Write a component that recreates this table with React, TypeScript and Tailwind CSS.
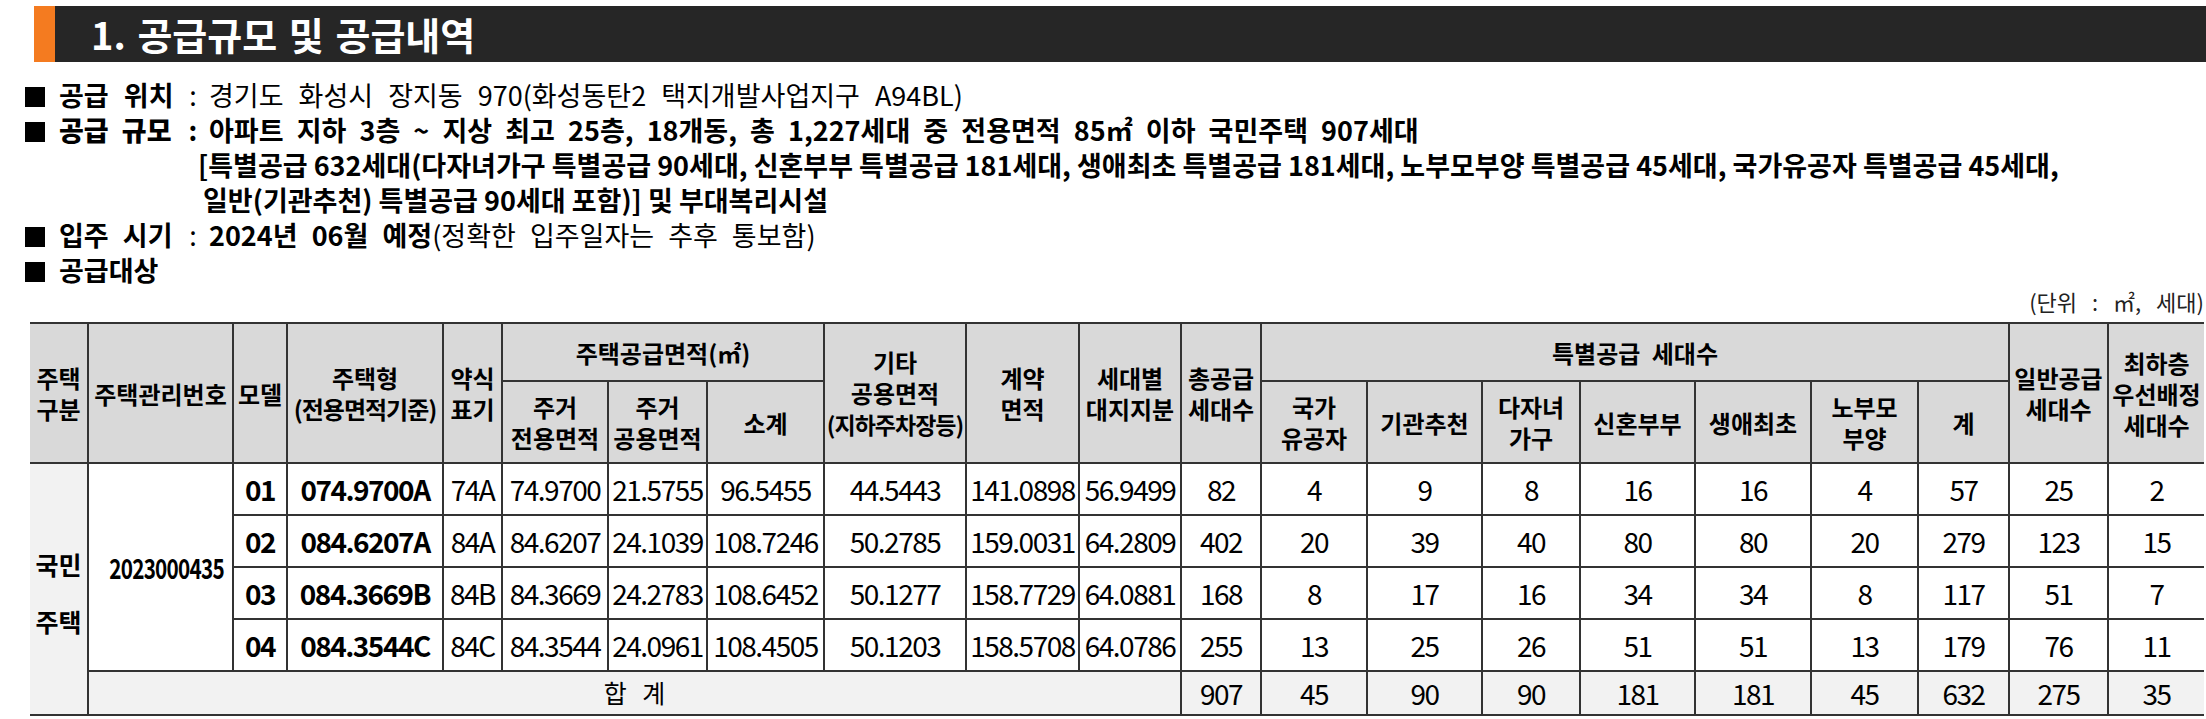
import React from 'react';

const rows = [
  { m: '01', type: '074.9700A', s: '74A', a: '74.9700', b: '21.5755', c: '96.5455', d: '44.5443', e: '141.0898', f: '56.9499', t: '82', sp: ['4', '9', '8', '16', '16', '4', '57'], g: '25', l: '2' },
  { m: '02', type: '084.6207A', s: '84A', a: '84.6207', b: '24.1039', c: '108.7246', d: '50.2785', e: '159.0031', f: '64.2809', t: '402', sp: ['20', '39', '40', '80', '80', '20', '279'], g: '123', l: '15' },
  { m: '03', type: '084.3669B', s: '84B', a: '84.3669', b: '24.2783', c: '108.6452', d: '50.1277', e: '158.7729', f: '64.0881', t: '168', sp: ['8', '17', '16', '34', '34', '8', '117'], g: '51', l: '7' },
  { m: '04', type: '084.3544C', s: '84C', a: '84.3544', b: '24.0961', c: '108.4505', d: '50.1203', e: '158.5708', f: '64.0786', t: '255', sp: ['13', '25', '26', '51', '51', '13', '179'], g: '76', l: '11' },
];

const totals = ['907', '45', '90', '90', '181', '181', '45', '632', '275', '35'];

const th = 'border-2 border-[#333] bg-[#d9d9d9] font-bold text-[24px] leading-[31px] text-center align-middle p-0 whitespace-nowrap';
const cell = 'border-2 border-[#333] text-center align-middle p-0 whitespace-nowrap';
const td = `${cell} text-[28px] tracking-[-1.5px]`;

function Bullet() {
  return <span className="inline-block w-[20px] h-[20px] bg-black mr-[14px] align-[-1px]" />;
}

function Label({ children }: { children: React.ReactNode }) {
  return (
    <>
      <span className="inline-block w-[152px]">
        <Bullet />
        <b>{children}</b>
      </span>
      <span className="inline-block w-[32px] text-center">:</span>
    </>
  );
}

export default function App() {
  return (
    <div className="w-[2206px] h-[719px] bg-white pt-[6px] font-['Noto_Sans_CJK_KR',sans-serif] text-black overflow-hidden">
      {/* section title */}
      <div className="ml-[34px] h-[56px] flex">
        <div className="w-[21px] bg-[#f47b20]" />
        <div className="flex-1 bg-[#262626] flex items-center pl-[36px]">
          <span className="text-white font-bold text-[38px] leading-none [word-spacing:3px]">1. 공급규모 및 공급내역</span>
        </div>
      </div>

      <div className="mt-[15px] pl-[25px] text-[27px] leading-[35px] whitespace-nowrap">
        <div className="[word-spacing:9px]">
          <Label>공급 위치</Label>
          경기도 화성시 장지동 970(화성동탄2 택지개발사업지구 A94BL)
        </div>
        <div className="font-bold [word-spacing:7px]">
          <Label>공급 규모</Label>
          아파트 지하 3층 ~ 지상 최고 25층, 18개동, 총 1,227세대 중 전용면적 85㎡ 이하 국민주택 907세대
        </div>
        <div className="font-bold pl-[173px]">
          [특별공급 632세대(다자녀가구 특별공급 90세대, 신혼부부 특별공급 181세대, 생애최초 특별공급 181세대, 노부모부양 특별공급 45세대, 국가유공자 특별공급 45세대,
        </div>
        <div className="font-bold pl-[178px]">일반(기관추천) 특별공급 90세대 포함)] 및 부대복리시설</div>
        <div className="[word-spacing:8px]">
          <Label>입주 시기</Label>
          <b>2024년 06월 예정</b>(정확한 입주일자는 추후 통보함)
        </div>
        <div className="font-bold">
          <Bullet />
          공급대상
        </div>
      </div>

      <div className="ml-[30px] w-[2174px]">
        <div className="mt-[2px] h-[24px] text-right text-[22px] leading-[24px] text-[#222] [word-spacing:10px]">(단위 : ㎡, 세대)</div>

        <table className="mt-[9px] w-[2174px] table-fixed border-collapse border-y-2 border-[#222]">
          <colgroup>
            <col className="w-[58px]" />
            <col className="w-[145px]" />
            <col className="w-[54px]" />
            <col className="w-[156px]" />
            <col className="w-[59px]" />
            <col className="w-[106px]" />
            <col className="w-[99px]" />
            <col className="w-[117px]" />
            <col className="w-[142px]" />
            <col className="w-[113px]" />
            <col className="w-[102px]" />
            <col className="w-[80px]" />
            <col className="w-[106px]" />
            <col className="w-[115px]" />
            <col className="w-[98px]" />
            <col className="w-[115px]" />
            <col className="w-[116px]" />
            <col className="w-[107px]" />
            <col className="w-[91px]" />
            <col className="w-[99px]" />
            <col className="w-[96px]" />
          </colgroup>
          <thead>
            <tr className="h-[58px]">
              <th rowSpan={2} className={`${th} border-l-0`}>주택<br />구분</th>
              <th rowSpan={2} className={th}>주택관리번호</th>
              <th rowSpan={2} className={th}>모델</th>
              <th rowSpan={2} className={th}>주택형<br /><span className="tracking-[-1px]">(전용면적기준)</span></th>
              <th rowSpan={2} className={th}>약식<br />표기</th>
              <th colSpan={3} className={th}>주택공급면적(㎡)</th>
              <th rowSpan={2} className={th}>기타<br />공용면적<br /><span className="text-[23px] tracking-[-1px]">(지하주차장등)</span></th>
              <th rowSpan={2} className={th}>계약<br />면적</th>
              <th rowSpan={2} className={th}>세대별<br />대지지분</th>
              <th rowSpan={2} className={th}>총공급<br />세대수</th>
              <th colSpan={7} className={`${th} [word-spacing:6px]`}>특별공급 세대수</th>
              <th rowSpan={2} className={th}>일반공급<br />세대수</th>
              <th rowSpan={2} className={`${th} border-r-0`}>최하층<br />우선배정<br />세대수</th>
            </tr>
            <tr className="h-[82px]">
              <th className={th}>주거<br />전용면적</th>
              <th className={th}>주거<br />공용면적</th>
              <th className={th}>소계</th>
              <th className={th}>국가<br />유공자</th>
              <th className={th}>기관추천</th>
              <th className={th}>다자녀<br />가구</th>
              <th className={th}>신혼부부</th>
              <th className={th}>생애최초</th>
              <th className={th}>노부모<br />부양</th>
              <th className={th}>계</th>
            </tr>
          </thead>
          <tbody>
            {rows.map((r, i) => (
              <tr key={r.m} className="h-[52px]">
                {i === 0 && (
                  <td rowSpan={5} className={`${cell} border-l-0 bg-[#f2f2f2] font-bold text-[25px]`}>
                    <div className="flex flex-col items-center gap-[22px] pt-[8px] leading-[35px]">
                      <span>국민</span>
                      <span>주택</span>
                    </div>
                  </td>
                )}
                {i === 0 && (
                  <td rowSpan={4} className={`${cell} font-bold text-[28px]`}>
                    <span className="inline-block scale-x-[0.74] tracking-[-1px]">2023000435</span>
                  </td>
                )}
                <td className={`${td} font-bold`}>{r.m}</td>
                <td className={`${td} font-bold`}>{r.type}</td>
                <td className={td}>{r.s}</td>
                <td className={td}>{r.a}</td>
                <td className={td}>{r.b}</td>
                <td className={td}>{r.c}</td>
                <td className={td}>{r.d}</td>
                <td className={td}>{r.e}</td>
                <td className={td}>{r.f}</td>
                <td className={td}>{r.t}</td>
                {r.sp.map((v, k) => (
                  <td key={k} className={td}>{v}</td>
                ))}
                <td className={td}>{r.g}</td>
                <td className={`${td} border-r-0`}>{r.l}</td>
              </tr>
            ))}
            <tr className="h-[37px] bg-[#f2f2f2]">
              <td colSpan={10} className={`${cell} text-[25px] [word-spacing:10px]`}>합 계</td>
              {totals.map((v, k) => (
                <td key={k} className={`${td} ${k === totals.length - 1 ? 'border-r-0' : ''}`}>{v}</td>
              ))}
            </tr>
          </tbody>
        </table>
      </div>
    </div>
  );
}
